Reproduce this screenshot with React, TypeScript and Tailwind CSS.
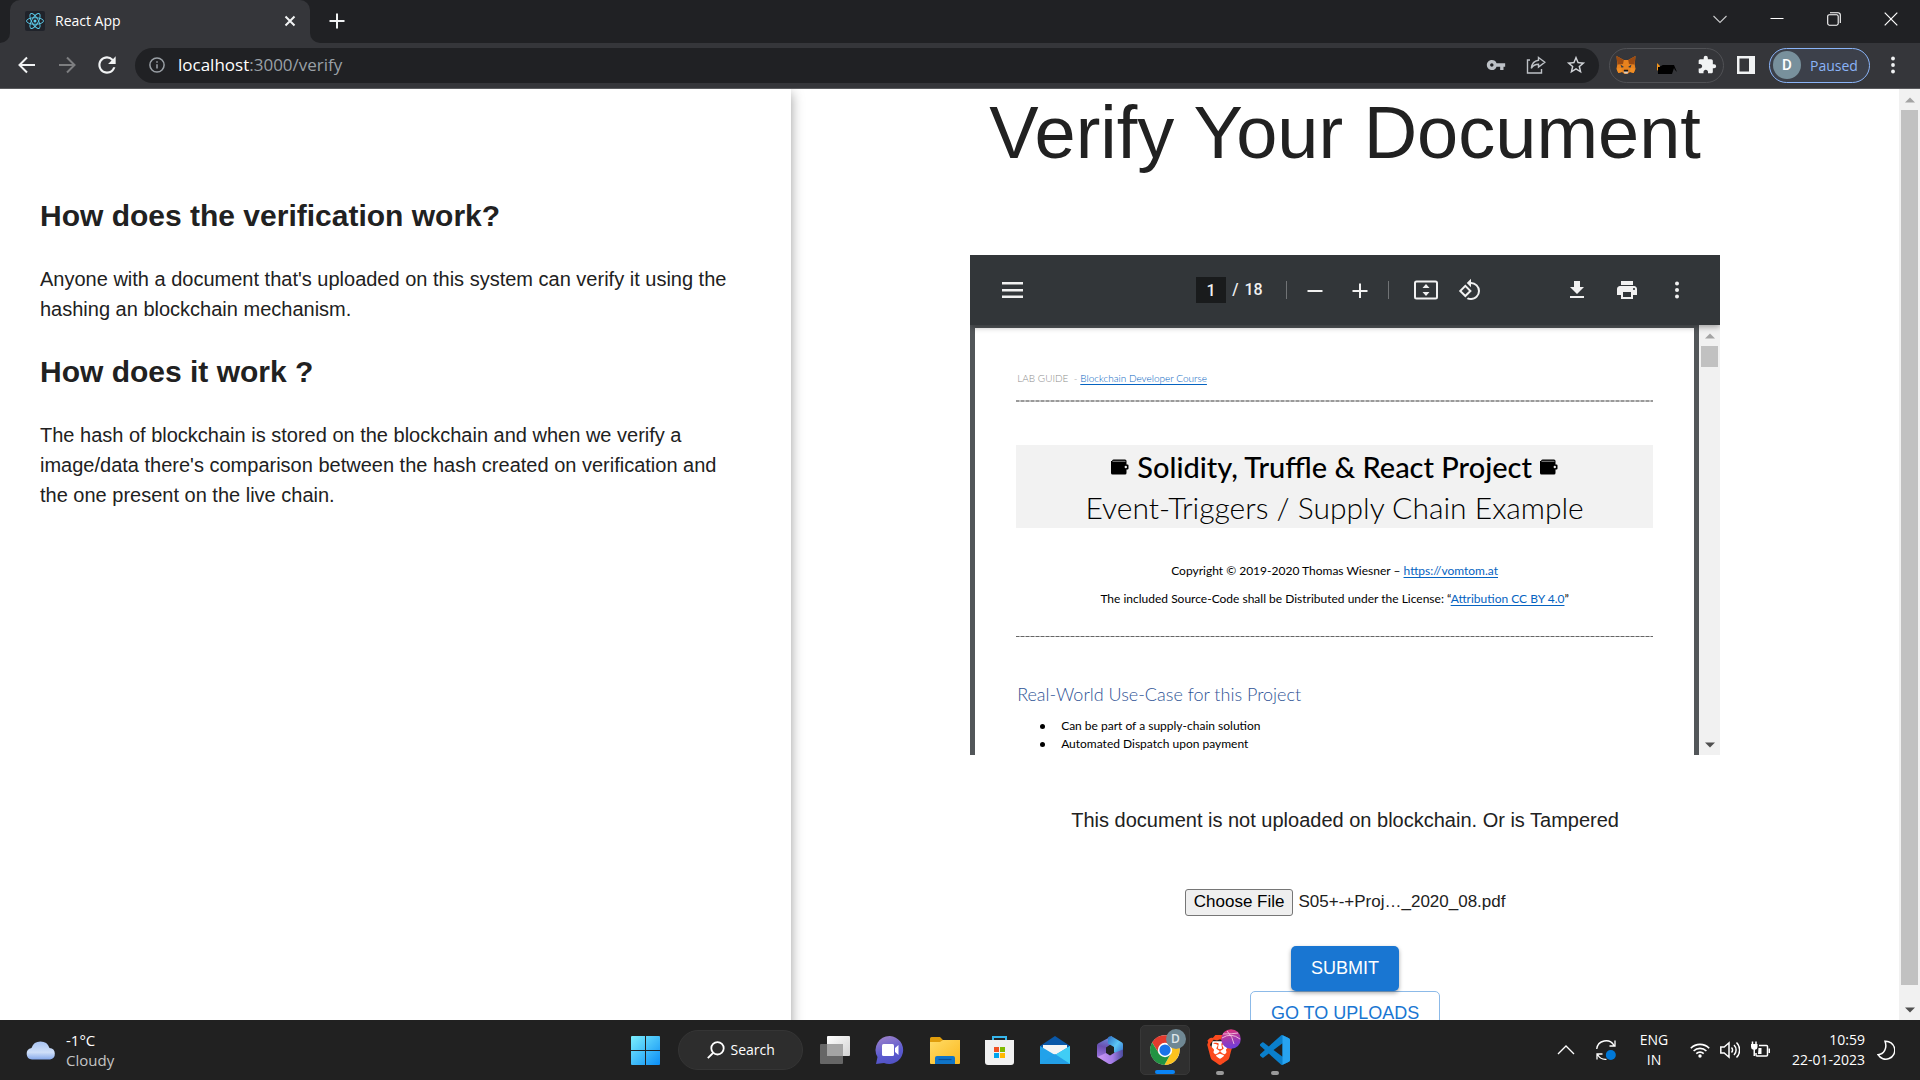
import type { ReactNode } from "react";
import {
  MdDownload,
  MdExtension,
  MdPrint,
  MdRefresh,
  MdRotate90DegreesCcw,
  MdStarBorder,
  MdVpnKey,
} from "react-icons/md";
import { SiBrave } from "react-icons/si";

const segoe = "font-['Open_Sans',sans-serif]";
const arial = "font-['Liberation_Sans',sans-serif]";
const calibri = "font-['Lato',sans-serif]";
const roboto = "font-['Roboto',sans-serif]";

function IconButton({ label, className, children }: { label: string; className: string; children: ReactNode }) {
  return (
    <button type="button" aria-label={label} className={`flex shrink-0 items-center justify-center ${className}`}>
      {children}
    </button>
  );
}

function ReactLogo() {
  return (
    <svg viewBox="0 0 20 20" className="size-5 shrink-0" fill="none" stroke="#5ccfee" strokeWidth="0.9">
      <rect width="20" height="20" rx="2" fill="#20232a" stroke="none" />
      <ellipse cx="10" cy="10" rx="8.5" ry="3.3" />
      <ellipse cx="10" cy="10" rx="8.5" ry="3.3" transform="rotate(60 10 10)" />
      <ellipse cx="10" cy="10" rx="8.5" ry="3.3" transform="rotate(120 10 10)" />
      <circle cx="10" cy="10" r="1.5" fill="#5ccfee" stroke="none" />
    </svg>
  );
}

function TabStrip() {
  return (
    <div className="flex h-[43px] items-stretch justify-between bg-[#202124] text-[#e8eaed]">
      <div className="flex">
        <div className="flex w-[10px] bg-[#35363a]">
          <div className="flex-1 rounded-br-[10px] bg-[#202124]" />
        </div>
        <div className="flex w-[300px] items-center rounded-t-[10px] bg-[#35363a] pr-[13px] pb-[2px] pl-[15px]">
          <ReactLogo />
          <span className="ml-[10px] flex-1 text-[14px] text-white">React App</span>
          <IconButton label="Close tab" className="size-[14px]">
            <svg viewBox="0 0 14 14" className="size-[14px]" stroke="#f1f3f4" strokeWidth="2">
              <path d="M2.5 2.5l9 9M11.5 2.5l-9 9" />
            </svg>
          </IconButton>
        </div>
        <div className="flex w-[10px] bg-[#35363a]">
          <div className="flex-1 rounded-bl-[10px] bg-[#202124]" />
        </div>
        <IconButton label="New tab" className="w-[34px] pb-[2px]">
          <svg viewBox="0 0 16 16" className="size-4" stroke="#f1f3f4" strokeWidth="2">
            <path d="M8 0.5v15M0.5 8h15" />
          </svg>
        </IconButton>
      </div>
      <div className="flex h-[37px]">
        <IconButton label="Search tabs" className="w-[57px]">
          <svg viewBox="0 0 14 14" className="size-[14px]" fill="none" stroke="#c8c9cb" strokeWidth="1.1">
            <path d="M0.5 4l6.5 6.5L13.5 4" />
          </svg>
        </IconButton>
        <IconButton label="Minimize" className="w-[57px]">
          <svg viewBox="0 0 14 14" className="size-[14px]" stroke="#fff" strokeWidth="1">
            <path d="M0.5 6.5h13" />
          </svg>
        </IconButton>
        <IconButton label="Restore" className="w-[57px]">
          <svg viewBox="0 0 14 14" className="size-[14px]" fill="none" stroke="#fff" strokeWidth="1.1">
            <rect x="0.7" y="2.7" width="10.5" height="10.5" rx="1.6" />
            <path d="M3 0.7h8a2.3 2.3 0 0 1 2.3 2.3v8" />
          </svg>
        </IconButton>
        <IconButton label="Close" className="w-[58px]">
          <svg viewBox="0 0 14 14" className="size-[14px]" stroke="#fff" strokeWidth="1.2">
            <path d="M0.7 0.7l12.6 12.6M13.3 0.7L0.7 13.3" />
          </svg>
        </IconButton>
      </div>
    </div>
  );
}

function Fox() {
  return (
    <svg viewBox="0 0 20 20" className="size-5">
      <path d="M0.5 1l7.3 4h4.4L19.5 1l-0.8 8.5 0.8 4.3-1.8 4.3-3.7-1L11.5 19h-3L6 17.1l-3.7 1L0.5 13.8l0.8-4.3z" fill="#e8821e" />
      <path d="M0.5 1l7.3 4-0.8 4-5.5 0.5zM19.5 1l-7.3 4 0.8 4 5.5 0.5z" fill="#9a4a12" />
      <path d="M4.5 9.500L8 12l-2.500 0.800zM15.500 9.500L12 12l2.500 0.800z" fill="#2c3a4c" />
      <path d="M7.500 16h5l-1 2.500h-3z" fill="#d8cfc6" />
      <path d="M8 14.800h4l0.300 1.800H7.700z" fill="#1c1613" />
      <path d="M0.500 13.800l5-1 0.500 4.300-3.700 1zM19.500 13.800l-5-1-0.500 4.300 3.700 1z" fill="#f08d24" />
    </svg>
  );
}

function Toolbar() {
  return (
    <div className="flex h-[46px] items-center border-b border-[#5a5b5e] bg-[#35363a] pr-5 pb-px pl-[7px]">
      <IconButton label="Back" className="size-10">
        <svg viewBox="0 0 18 18" className="size-[18px]" fill="none" stroke="#f1f3f4" strokeWidth="2">
          <path d="M17 9H2M9 1.500L1.500 9 9 16.500" />
        </svg>
      </IconButton>
      <IconButton label="Forward" className="size-10">
        <svg viewBox="0 0 18 18" className="size-[18px]" fill="none" stroke="#7d7e80" strokeWidth="2">
          <path d="M1 9h15M9 1.500L16.500 9 9 16.500" />
        </svg>
      </IconButton>
      <IconButton label="Reload" className="size-10">
        <MdRefresh className="size-[26px] text-[#f1f3f4]" />
      </IconButton>
      <div className="ml-2 flex h-[35px] min-w-0 flex-1 items-center rounded-full bg-[#202124] pr-[3px] pl-[14px]">
        <svg viewBox="0 0 16 16" className="size-4 shrink-0" fill="none" stroke="#9aa0a6" strokeWidth="1.500">
          <circle cx="8" cy="8" r="7.100" />
          <path d="M8 7.200v4.300M8 4.300v1.500" />
        </svg>
        <span className="relative ml-[13px] flex h-full min-w-0 flex-1 items-center text-[17px] text-[#9aa0a6]">
          <input
            aria-label="Address and search bar"
            className="absolute inset-0 bg-transparent text-transparent outline-none"
          />
          <span className="text-white">localhost</span>:3000/verify
        </span>
        <IconButton label="Saved passwords" className="size-10">
          <MdVpnKey className="size-5 text-[#bdc1c6]" />
        </IconButton>
        <IconButton label="Share" className="size-10">
          <svg viewBox="0 0 20 20" className="size-5" fill="none" stroke="#bdc1c6" strokeWidth="1.400">
            <path d="M4 5H1.500v13h14v-4" />
            <path d="M12.500 2.500l6.300 4.800-6.300 4.800V9.300C9 9.300 7 10.500 5.300 13.300 5.800 9 8 5.900 12.500 5.300z" />
          </svg>
        </IconButton>
        <IconButton label="Bookmark this tab" className="size-10">
          <MdStarBorder className="size-[22px] text-[#d0d3d7]" />
        </IconButton>
      </div>
      <div className="ml-[10px] flex h-[35px] w-[115px] items-center justify-between rounded-full border border-[#505155] px-[6px]">
        <IconButton label="MetaMask" className="size-5">
          <Fox />
        </IconButton>
        <IconButton label="Extension" className="size-5">
          <svg viewBox="0 0 20 20" className="size-5">
            <path d="M0 8l3 3v6l-3-2z" fill="#f0931c" />
            <path d="M1 12c3 0 3-2 6-2h10l3 7-2-2-1-2-2 6H1z" fill="#000" />
          </svg>
        </IconButton>
        <IconButton label="Extensions" className="size-5">
          <MdExtension className="size-5 text-[#f1f3f4]" />
        </IconButton>
      </div>
      <IconButton label="Side panel" className="ml-[13px] size-[18px]">
        <svg viewBox="0 0 18 18" className="size-[18px]" fill="#f1f3f4">
          <path fillRule="evenodd" d="M0 0h18v18H0zM2.500 2.500v13H12v-13z" />
        </svg>
      </IconButton>
      <button
        type="button"
        className="ml-[14px] flex h-[35px] w-[101px] shrink-0 items-center rounded-full border border-[#8ab4f8] bg-[#3c404a] pl-[3px] text-[14px] text-[#8ab4f8]"
      >
        <span className={`flex size-7 items-center justify-center rounded-full bg-[#78909c] text-[15px] font-medium text-white ${roboto}`}>
          D
        </span>
        <span className="ml-[9px]">Paused</span>
      </button>
      <IconButton label="Menu" className="ml-[15px] h-6 w-[15px]">
        <svg viewBox="0 0 4 18" className="h-[18px] w-1" fill="#f1f3f4">
          <circle cx="2" cy="2.500" r="1.900" />
          <circle cx="2" cy="9" r="1.900" />
          <circle cx="2" cy="15.500" r="1.900" />
        </svg>
      </IconButton>
    </div>
  );
}

function Arrow({ down, dark }: { down?: boolean; dark?: boolean }) {
  return (
    <div className="flex h-[21px] shrink-0 items-center justify-center">
      <svg viewBox="0 0 10 6" className={dark ? "h-[6px] w-[10px] text-[#505050]" : "h-[6px] w-[10px] text-[#a3a3a3]"} fill="currentColor">
        <path d={down ? "M0 0.500h10L5 5.500z" : "M0 5.500h10L5 0.500z"} />
      </svg>
    </div>
  );
}

function Explainer() {
  return (
    <section className="z-10 col-span-5 bg-white pt-[107px] pr-12 pl-10 shadow-[0_4px_12px_rgba(0,0,0,0.4)]">
      <h2 className="text-[30px] leading-10 font-bold">How does the verification work?</h2>
      <p className="mt-7 text-[20px] leading-[30px]">
        Anyone with a document that's uploaded on this system can verify it using the hashing an blockchain mechanism.
      </p>
      <h2 className="mt-7 text-[30px] leading-10 font-bold">How does it work ?</h2>
      <p className="mt-7 text-[20px] leading-[30px]">
        The hash of blockchain is stored on the blockchain and when we verify a image/data there's comparison between
        the hash created on verification and the one present on the live chain.
      </p>
    </section>
  );
}

function Wallet() {
  return (
    <svg viewBox="0 0 18 16" className="h-4 w-[18px]">
      <path d="M1 2a1.500 1.500 0 0 1 1.500-1.500H14a1.500 1.500 0 0 1 1.500 1.500v3.500h1a1 1 0 0 1 1 1v3a1 1 0 0 1-1 1h-1V14a1.500 1.500 0 0 1-1.500 1.500H1.500A1.500 1.500 0 0 1 0 14V2z" fill="#000" />
      <path d="M1.500 2.300h13" stroke="#8a8a8a" />
      <circle cx="14.800" cy="8" r="1.200" fill="#eee" />
    </svg>
  );
}

function PdfToolbar() {
  return (
    <div className={`relative z-10 flex h-[70px] shrink-0 items-center bg-[#323639] text-[#f1f1f1] shadow-[0_2px_6px_rgba(0,0,0,0.35)] ${roboto}`}>
      <IconButton label="Toggle sidebar" className="ml-8 h-6 w-[21px]">
        <svg viewBox="0 0 21 16" className="h-4 w-[21px]" fill="#f1f1f1">
          <path d="M0 0h21v2.500H0zM0 7h21v2.500H0zM0 13.500h21V16H0z" />
        </svg>
      </IconButton>
      <input
        aria-label="Page number"
        defaultValue="1"
        className="ml-[173px] h-[26px] w-[30px] bg-[#191b1c] text-center text-[16px] font-medium"
      />
      <span className="ml-[6px] flex gap-[6px] text-[16px] font-medium">
        <span>/</span>
        <span>18</span>
      </span>
      <span className="ml-auto h-[18px] w-px bg-[#707375]" />
      <IconButton label="Zoom out" className="ml-[20px] size-4">
        <svg viewBox="0 0 16 16" className="size-4" stroke="#f1f1f1" strokeWidth="2">
          <path d="M0.500 9h15" />
        </svg>
      </IconButton>
      <IconButton label="Zoom in" className="ml-[29px] size-4">
        <svg viewBox="0 0 16 16" className="size-4" stroke="#f1f1f1" strokeWidth="2">
          <path d="M0.500 9h15M8 1.500v15" />
        </svg>
      </IconButton>
      <span className="ml-5 h-[18px] w-px bg-[#707375]" />
      <IconButton label="Fit to page" className="ml-[25px] size-6">
        <svg viewBox="0 0 24 20" className="h-5 w-6" fill="none" stroke="#f1f1f1" strokeWidth="2">
          <rect x="1" y="1.500" width="22" height="17" rx="1.500" />
          <path d="M12 4l3.500 4h-7zM12 16l3.500-4h-7z" fill="#f1f1f1" stroke="none" />
        </svg>
      </IconButton>
      <IconButton label="Rotate counterclockwise" className="ml-5 size-6">
        <MdRotate90DegreesCcw className="size-6" />
      </IconButton>
      <IconButton label="Download" className="ml-[83px] size-6">
        <MdDownload className="size-[26px]" />
      </IconButton>
      <IconButton label="Print" className="ml-[26px] size-6">
        <MdPrint className="size-6" />
      </IconButton>
      <IconButton label="More actions" className="mr-[31px] ml-[26px] size-6">
        <svg viewBox="0 0 4 18" className="h-[18px] w-1" fill="#f1f1f1">
          <circle cx="2" cy="2.500" r="2" />
          <circle cx="2" cy="9" r="2" />
          <circle cx="2" cy="15.500" r="2" />
        </svg>
      </IconButton>
    </div>
  );
}

function PdfViewer() {
  return (
    <div className="mt-[78px] flex h-[500px] w-[750px] max-w-full flex-col overflow-hidden bg-[#525659]">
      <PdfToolbar />
      <div className="flex min-h-0 flex-1">
        <article className={`mx-[5px] mt-[3px] flex-1 bg-white px-[41px] pt-[40px] text-black ${calibri}`}>
          <p className="pl-px text-[10px] leading-5 font-light whitespace-pre text-[#8c8c8c]">
            LAB GUIDE {" "}-{" "}
            <a href="#course" className="text-[#0563c1] underline underline-offset-2">Blockchain Developer Course</a>
          </p>
          <hr className="mt-3 h-[2px] border-0 bg-[repeating-linear-gradient(90deg,#9a9a9a_0_3px,#c4c4c4_3px_5px)]" />
          <header className="mt-[43px] flex h-[83px] flex-col items-center bg-[#f2f2f2] pt-[2px] leading-10">
            <h1 className="flex items-center gap-2 text-[29px] leading-10 font-medium">
              <Wallet />
              Solidity, Truffle &amp; React Project
              <Wallet />
            </h1>
            <p className="text-[30px] leading-10 font-light">Event-Triggers / Supply Chain Example</p>
          </header>
          <div className="mt-[29px] flex flex-col items-center text-[12px] leading-7">
            <p>
              Copyright © 2019-2020 Thomas Wiesner – <a href="#vomtom" className="text-[#0563c1] underline underline-offset-2">https://vomtom.at</a>
            </p>
            <p>
              The included Source-Code shall be Distributed under the License: “
              <a href="#license" className="text-[#0563c1] underline underline-offset-2">Attribution CC BY 4.0</a>”
            </p>
          </div>
          <hr className="mt-[23px] h-px border-0 bg-[repeating-linear-gradient(90deg,#666_0_3px,#aaa_3px_5px)]" />
          <h2 className="mt-[43px] pl-px text-[18px] leading-7 font-light text-[#2f5496]">Real-World Use-Case for this Project</h2>
          <ul className="mt-[9px] text-[12px] leading-[18px]">
            {["Can be part of a supply-chain solution", "Automated Dispatch upon payment"].map((item) => (
              <li key={item} className="flex items-center gap-4 pl-6">
                <span className="size-[5px] rounded-full bg-black" />
                {item}
              </li>
            ))}
          </ul>
        </article>
        <div className="flex w-[21px] flex-col bg-[#f1f1f1]">
          <Arrow />
          <div className="mx-[2px] h-[21px] bg-[#c1c1c1]" />
          <div className="flex-1" />
          <Arrow down dark />
        </div>
      </div>
    </div>
  );
}

function VerifyForm() {
  return (
    <section className="col-span-7 flex min-w-0 flex-col items-center">
      <h1 className="text-[74px] leading-[88px] font-normal">Verify Your Document</h1>
      <PdfViewer />
      <p className="mt-[50px] text-[20px] leading-[30px]">This document is not uploaded on blockchain. Or is Tampered</p>
      <div className="mt-[54px] flex h-[27px] items-center gap-[5px] text-[17px]">
        <input id="document" type="file" className="sr-only" />
        <label
          htmlFor="document"
          className="flex h-[27px] items-center rounded-[3px] border border-[#767676] bg-[#efefef] px-2 pb-[2px] text-black"
        >
          Choose File
        </label>
        <span className="pb-[2px]">S05+-+Proj…_2020_08.pdf</span>
      </div>
      <button
        type="button"
        className="z-10 mt-[30px] h-[45px] shrink-0 rounded-[5px] bg-[#1976d2] px-5 text-[18px] text-white shadow-[0_2px_4px_rgba(0,0,0,0.35)]"
      >
        SUBMIT
      </button>
      <button type="button" className="h-[45px] shrink-0 rounded-[5px] border border-[#8cbae8] px-5 text-[18px] text-[#1976d2]">
        GO TO UPLOADS
      </button>
    </section>
  );
}

function TaskButton({ label, active, indicator, children }: { label: string; active?: boolean; indicator?: boolean; children: ReactNode }) {
  return (
    <button
      type="button"
      aria-label={label}
      className={`relative flex size-[50px] items-center justify-center rounded-[5px] ${active ? "border border-[#383838] bg-[#2f2f2f]" : ""}`}
    >
      {children}
      {active && <span className="absolute bottom-0 h-1 w-5 rounded-full bg-[#0a84f5]" />}
      {indicator && <span className="absolute bottom-0 h-1 w-2 rounded-full bg-[#9a9a9a]" />}
    </button>
  );
}

function StartIcon() {
  return (
    <svg viewBox="0 0 29 29" className="size-[29px]">
      <defs>
        <linearGradient id="win" x1="0" y1="0" x2="1" y2="1">
          <stop offset="0" stopColor="#7ceffd" />
          <stop offset="1" stopColor="#0a8df5" />
        </linearGradient>
      </defs>
      <path d="M1 0h13v14H0V1a1 1 0 0 1 1-1zM15 0h13a1 1 0 0 1 1 1v13H15zM0 15h14v14H1a1 1 0 0 1-1-1zM15 15h14v13a1 1 0 0 1-1 1H15z" fill="url(#win)" />
    </svg>
  );
}

function TaskViewIcon() {
  return (
    <svg viewBox="0 0 30 28" className="h-7 w-[30px]">
      <defs>
        <linearGradient id="tv" x1="0" y1="0" x2="1" y2="1">
          <stop offset="0" stopColor="#fff" />
          <stop offset="1" stopColor="#d2d2d2" />
        </linearGradient>
      </defs>
      <rect x="7" width="23" height="20" rx="1" fill="url(#tv)" />
      <rect y="8" width="23" height="20" rx="1" fill="#666" />
      <path d="M7 8h16v12H7z" fill="#a4a4a4" />
    </svg>
  );
}

function ChatIcon() {
  return (
    <svg viewBox="0 0 30 30" className="size-[30px]">
      <defs>
        <linearGradient id="chat" x1="0.300" y1="0" x2="0.600" y2="1">
          <stop offset="0" stopColor="#9b80c9" />
          <stop offset="0.600" stopColor="#5c5bd0" />
          <stop offset="1" stopColor="#5152c4" />
        </linearGradient>
      </defs>
      <path d="M15 1a14 14 0 1 1-6 27L1 29l1.500-7A14 14 0 0 1 15 1z" fill="url(#chat)" />
      <rect x="7" y="9" width="12" height="12" rx="1.500" fill="#fff" />
      <path d="M20 13l3.500-3v10L20 17z" fill="#fff" />
    </svg>
  );
}

function FolderIcon() {
  return (
    <svg viewBox="0 0 30 27" className="h-[27px] w-[30px]">
      <defs>
        <linearGradient id="fold" x1="0" y1="0" x2="1" y2="1">
          <stop offset="0" stopColor="#ffdb66" />
          <stop offset="1" stopColor="#fbb91f" />
        </linearGradient>
      </defs>
      <path d="M0 1.500A1.500 1.500 0 0 1 1.500 0H10l3 3h15.500A1.500 1.500 0 0 1 30 4.500V8H0z" fill="#e09d0c" />
      <path d="M0 5h10l3-2h17v23a1 1 0 0 1-1 1H1a1 1 0 0 1-1-1z" fill="url(#fold)" />
      <path d="M5 27v-6a2 2 0 0 1 2-2h16a2 2 0 0 1 2 2v6z" fill="#0f74c8" />
      <path d="M8.500 22.500h13" stroke="#0a4f96" strokeWidth="1.200" />
    </svg>
  );
}

function StoreIcon() {
  return (
    <svg viewBox="0 0 29 29" className="size-[29px]">
      <path d="M8 5V1h13v4" fill="none" stroke="#36b6ec" strokeWidth="2" />
      <path d="M0 4h29v22a3 3 0 0 1-3 3H3a3 3 0 0 1-3-3z" fill="#f1f1f1" />
      <path d="M9 11h5v5H9z" fill="#f05123" />
      <path d="M15 11h5v5h-5z" fill="#7fba00" />
      <path d="M9 17h5v5H9z" fill="#00a4ef" />
      <path d="M15 17h5v5h-5z" fill="#ffb901" />
    </svg>
  );
}

function MailIcon() {
  return (
    <svg viewBox="0 0 30 28" className="h-7 w-[30px]">
      <path d="M0 10L15 0l15 10v6H0z" fill="#0a58a8" />
      <path d="M3 9h24v7L15 19 3 16z" fill="#f5f5f5" />
      <path d="M0 10l15 9 15-9v18H0z" fill="#22a2ea" />
      <path d="M30 10L15 19l15 9z" fill="#40cdf5" />
      <path d="M0 28l15-10 15 10z" fill="#239fe6" />
    </svg>
  );
}

function M365Icon() {
  return (
    <svg viewBox="0 0 28 30" className="h-[30px] w-7">
      <defs>
        <linearGradient id="ma" x1="0.500" y1="0" x2="0.300" y2="1">
          <stop offset="0" stopColor="#6f8fe0" />
          <stop offset="0.500" stopColor="#6a4fb0" />
          <stop offset="1" stopColor="#9a73dc" />
        </linearGradient>
        <linearGradient id="mb" x1="0" y1="0" x2="1" y2="1">
          <stop offset="0" stopColor="#2c6fc4" />
          <stop offset="0.500" stopColor="#5cc6f5" />
          <stop offset="1" stopColor="#2f5fc4" />
        </linearGradient>
        <linearGradient id="mc" x1="0" y1="0" x2="1" y2="0">
          <stop offset="0" stopColor="#d09af5" />
          <stop offset="0.600" stopColor="#a27be6" />
          <stop offset="1" stopColor="#4a4a9c" />
        </linearGradient>
      </defs>
      <path d="M16 1L2.500 8.200Q1 9 1 10.500V21q0 1 1 1.500l8-3.500V12.500l6-4z" fill="url(#ma)" />
      <path d="M12 2.500q2-2 4.500-0.800L26 7.500q1 0.700 1 2v11.500l-9-3.500v-5.500l-6-3.500z" fill="url(#mb)" />
      <path d="M1.500 22l8.500-4 4 2.500 4-2.500 9-3.500V20q0 1.500-1 2.200l-10 6.200q-2 1-4 0z" fill="url(#mc)" />
    </svg>
  );
}

function ChromeIcon() {
  return (
    <svg viewBox="0 0 48 48" className="size-[30px]">
      <circle cx="24" cy="24" r="23.500" fill="#fff" />
      <path d="M24 13h20.800A23.900 23.900 0 0 0 3.300 12l10.900 17z" fill="#e33b2e" />
      <path d="M33.500 29.500L23 47.900A23.900 23.900 0 0 0 44.800 13H24z" fill="#fcc31e" />
      <path d="M14.500 29.500L3.300 12A23.900 23.900 0 0 0 23 47.900l10.500-18.400z" fill="#229342" />
      <circle cx="24" cy="24" r="11.500" fill="#fff" />
      <circle cx="24" cy="24" r="9" fill="#1a73e8" />
    </svg>
  );
}

function VsCodeIcon() {
  return (
    <svg viewBox="0 0 24 24" className="size-[30px]">
      <path
        d="M23.150 2.587L18.210.210a1.494 1.494 0 0 0-1.705.290l-9.460 8.630-4.120-3.128a.999.999 0 0 0-1.276.057L.327 7.261A1 1 0 0 0 .326 8.740L3.899 12 .326 15.260a1 1 0 0 0 .001 1.479L1.650 17.940a.999.999 0 0 0 1.276.057l4.120-3.128 9.460 8.630a1.492 1.492 0 0 0 1.704.290l4.942-2.377A1.500 1.500 0 0 0 24 20.060V3.939a1.500 1.500 0 0 0-.850-1.352zm-5.146 14.861L10.826 12l7.178-5.448v10.896z"
        fill="#0a7fcb"
      />
      <path d="M18 0.150l5.150 2.437A1.500 1.500 0 0 1 24 3.939V20.060a1.500 1.500 0 0 1-.850 1.350L18 23.850z" fill="#27a3f0" />
    </svg>
  );
}

function Taskbar() {
  return (
    <footer className="grid h-[60px] shrink-0 grid-cols-[1fr_auto_1fr] items-center bg-[#212121] text-[14px] leading-5 text-white">
      <button type="button" className="ml-[26px] flex items-center gap-[10px] justify-self-start text-left text-[15px] leading-5">
        <svg viewBox="0 0 30 20" className="h-5 w-[30px]">
          <defs>
            <linearGradient id="cloud" x1="0" y1="0" x2="0" y2="1">
              <stop offset="0" stopColor="#a9c4f3" />
              <stop offset="0.600" stopColor="#cfdff8" />
              <stop offset="1" stopColor="#86a9ea" />
            </linearGradient>
          </defs>
          <path d="M6 19.500A5.800 5.800 0 0 1 5.500 8 9.500 9.500 0 0 1 23.500 8 5.800 5.800 0 0 1 24 19.500z" fill="url(#cloud)" />
        </svg>
        <span className="flex flex-col">
          <span>-1°C</span>
          <span className="text-[#c4c4c4]">Cloudy</span>
        </span>
      </button>

      <div className="flex items-center gap-[5px]">
        <TaskButton label="Start">
          <StartIcon />
        </TaskButton>
        <button type="button" className="mx-[2px] flex h-10 w-[125px] items-center gap-[6px] rounded-full border border-[#353535] bg-[#2d2d2d] pl-[28px]">
          <svg viewBox="0 0 18 18" className="size-[18px]" fill="none" stroke="#fff" strokeWidth="1.800">
            <circle cx="10.500" cy="7.300" r="6.200" />
            <path d="M6 12L0.800 17.200" />
          </svg>
          Search
        </button>
        <TaskButton label="Task view">
          <TaskViewIcon />
        </TaskButton>
        <TaskButton label="Chat">
          <ChatIcon />
        </TaskButton>
        <TaskButton label="File Explorer">
          <FolderIcon />
        </TaskButton>
        <TaskButton label="Microsoft Store">
          <StoreIcon />
        </TaskButton>
        <TaskButton label="Mail">
          <MailIcon />
        </TaskButton>
        <TaskButton label="Microsoft 365">
          <M365Icon />
        </TaskButton>
        <TaskButton label="Google Chrome" active>
          <ChromeIcon />
          <span className="absolute top-[3px] right-[3px] flex size-5 items-center justify-center rounded-full bg-[#6f8894] text-[12px] font-semibold text-[#dfe6e9]">
            D
          </span>
        </TaskButton>
        <TaskButton label="Brave" indicator>
          <svg viewBox="0 0 24 24" className="absolute size-[30px]">
            <path d="M6 5h12l1 6-3 7-4 3-4-3-3-7z" fill="#fff" />
          </svg>
          <SiBrave className="relative size-[30px] text-[#fb4a1e]" />
          <svg viewBox="0 0 20 20" className="absolute top-1 right-1 size-5">
            <defs>
              <linearGradient id="ball" x1="0.300" y1="0" x2="0.500" y2="1">
                <stop offset="0" stopColor="#e0347a" />
                <stop offset="1" stopColor="#6a3ee0" />
              </linearGradient>
            </defs>
            <circle cx="10" cy="10" r="9.800" fill="url(#ball)" />
            <path d="M1 9q9-6 18 1M6 2q6 6 7 13M2 5q9 0 15-1" fill="none" stroke="#f3c4e0" strokeWidth="0.900" />
          </svg>
        </TaskButton>
        <TaskButton label="Visual Studio Code" indicator>
          <VsCodeIcon />
        </TaskButton>
      </div>

      <div className="flex items-center justify-self-end pr-[25px]">
        <IconButton label="Show hidden icons" className="size-5">
          <svg viewBox="0 0 18 10" className="h-[10px] w-[18px]" fill="none" stroke="#fff" strokeWidth="1.300">
            <path d="M1 9l8-8 8 8" />
          </svg>
        </IconButton>
        <IconButton label="Updates" className="ml-5 size-5">
          <svg viewBox="0 0 20 20" className="size-5" fill="none" stroke="#fff" strokeWidth="1.300">
            <path d="M0.700 9A9.300 9.300 0 0 1 18 5.500M19 0.500v5.500h-5.500M1 19.500V14h5.500M1.500 14.500a9.300 9.300 0 0 0 9 4.800" />
            <circle cx="14.800" cy="15" r="5" fill="#0078d7" stroke="none" />
          </svg>
        </IconButton>
        <button type="button" className="ml-[22px] w-8 text-center">
          ENG
          <br />
          IN
        </button>
        <button type="button" aria-label="Network, volume and battery" className="ml-5 flex items-center gap-[10px]">
          <svg viewBox="0 0 20 16" className="h-4 w-5" fill="none" stroke="#fff" strokeWidth="1.600">
            <path d="M0.800 6.200a13 13 0 0 1 18.400 0M3.600 9a9 9 0 0 1 12.800 0M6.300 11.600a5.300 5.300 0 0 1 7.400 0" />
            <circle cx="10" cy="14" r="1.700" fill="#fff" stroke="none" />
          </svg>
          <svg viewBox="0 0 20 18" className="h-[18px] w-5" fill="none" stroke="#fff" strokeWidth="1.500">
            <path d="M0.800 6h3.400L9 1.800v14.400L4.200 12H0.800zM11.500 6.500a3.500 3.500 0 0 1 0 5M14 4a7 7 0 0 1 0 10M16.500 1.500a10.500 10.500 0 0 1 0 15" />
          </svg>
          <svg viewBox="0 0 20 18" className="h-[18px] w-5" fill="none" stroke="#fff" strokeWidth="1.500">
            <path d="M9 4.500h7.500a1 1 0 0 1 1 1v8.500a1 1 0 0 1-1 1H7a1 1 0 0 1-1-1v-2" />
            <path d="M8.500 7h3v6H8zM1 3h6.500v3a3 3 0 0 1-2.500 2.800V15H3.500V8.800A3 3 0 0 1 1 6zM18.500 7.500h1.500v4.500h-1.500z" fill="#fff" stroke="none" />
            <path d="M2.500 0.500V3M6 0.500V3" />
          </svg>
        </button>
        <button type="button" className="ml-[19px] flex items-center gap-3 text-right">
          <span className="w-[76px] whitespace-nowrap">
            10:59
            <br />
            22-01-2023
          </span>
          <svg viewBox="0 0 18 20" className="h-5 w-[18px]" fill="none" stroke="#fff" strokeWidth="1.500">
            <path d="M8 1.200a9 9 0 1 1-7 13.500C7 14.500 10.500 8 8 1.200z" />
          </svg>
        </button>
      </div>
    </footer>
  );
}

export default function App() {
  return (
    <div className={`flex h-screen flex-col overflow-hidden bg-white ${segoe}`}>
      <header className="shrink-0">
        <TabStrip />
        <Toolbar />
      </header>
      <div className="flex min-h-0 flex-1">
        <main className={`grid min-w-0 flex-1 grid-cols-12 overflow-hidden text-[#212121] ${arial}`}>
          <Explainer />
          <VerifyForm />
        </main>
        <div className="flex w-[21px] flex-col bg-[#f1f1f1]">
          <Arrow />
          <div className="mx-[2px] flex-1 bg-[#c1c1c1]" />
          <div className="h-[14px]" />
          <Arrow down dark />
        </div>
      </div>
      <Taskbar />
    </div>
  );
}
